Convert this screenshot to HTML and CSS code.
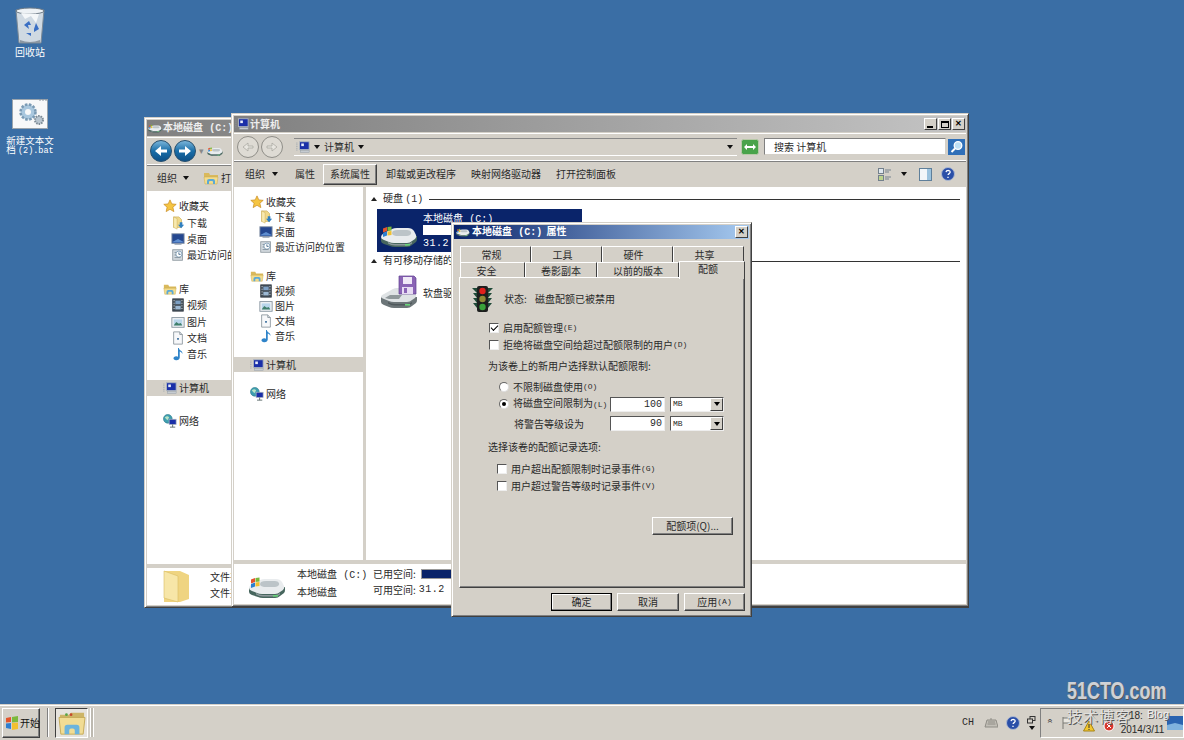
FILE: index.html
```html
<!DOCTYPE html>
<html lang="zh-CN">
<head>
<meta charset="utf-8">
<title>本地磁盘 (C:) 属性</title>
<link rel="stylesheet" href="styles.css">
</head>
<body>
<svg class="defs" width="0" height="0">
  <defs>
    <symbol id="i-star" viewBox="0 0 16 16"><path d="M8 1l2.100 4.600 5 .5-3.800 3.300 1.100 5L8 11.800 3.600 14.400l1.100-5L.9 6.100l5-.5z" fill="#f5c542" stroke="#c98a1e" stroke-width=".8"/></symbol>
    <symbol id="i-lib" viewBox="0 0 16 16"><path d="M1 3h5l1 2h8v3H1z" fill="#d9b95c"/><path d="M1 7h14l-1 7H2z" fill="#f3dc8c" stroke="#c9a94e" stroke-width=".5"/><path d="M4 14v-3q0-2 2-2h4q2 0 2 2v3h-2v-2q0-1-1-1H7q-1 0-1 1v2z" fill="#5ba9d6"/></symbol>
    <symbol id="i-dl" viewBox="0 0 16 16"><path d="M3 1h6l3 3v9H3z" fill="#f0d98a" stroke="#c6a850" stroke-width=".7"/><path d="M3 1l4 2v12l-4-2z" fill="#f8eab0" stroke="#c6a850" stroke-width=".5"/><path d="M10 7h3v3h2l-3.500 4L8 10h2z" fill="#2f7fc1"/></symbol>
    <symbol id="i-desk" viewBox="0 0 16 16"><rect x="1" y="2" width="14" height="11" fill="#24478f" stroke="#8a97a8"/><path d="M2 11l6-3 6 3v1H2z" fill="#5e8ed0"/><rect x="4" y="13" width="8" height="1.500" fill="#8a97a8"/></symbol>
    <symbol id="i-recent" viewBox="0 0 16 16"><rect x="2" y="2" width="11" height="12" fill="#d7dde2" stroke="#8d979f"/><circle cx="9" cy="7" r="3.500" fill="#fff" stroke="#7f9fb8"/><path d="M9 5v2.300h2" stroke="#41688a" fill="none"/><path d="M4 5h2M4 8h2M4 11h7" stroke="#7b8a96"/></symbol>
    <symbol id="i-video" viewBox="0 0 16 16"><rect x="2" y="1" width="12" height="14" fill="#47525c" stroke="#2f3840"/><rect x="5" y="3" width="6" height="4" fill="#7da0c4"/><rect x="5" y="9" width="6" height="4" fill="#9db9d4"/><path d="M3 3h1M3 6h1M3 9h1M3 12h1M12 3h1M12 6h1M12 9h1M12 12h1" stroke="#fff"/></symbol>
    <symbol id="i-pic" viewBox="0 0 16 16"><rect x="1" y="3" width="14" height="11" fill="#f4f6f8" stroke="#7f8d99"/><rect x="3" y="5" width="10" height="7" fill="#b8d5ea"/><path d="M3 12l3-4 3 2 2-1 2 3z" fill="#3f7f6b"/></symbol>
    <symbol id="i-doc" viewBox="0 0 16 16"><path d="M3 1h7l3 3v11H3z" fill="#f7f8fa" stroke="#8d979f"/><path d="M10 1v3h3" fill="#d8dee3" stroke="#8d979f"/><rect x="7" y="8" width="2" height="2" fill="#3d6f9e"/></symbol>
    <symbol id="i-music" viewBox="0 0 16 16"><path d="M9 1c0 3 5 3 4 7-.6-1.800-2-2.500-3-2.800V12c0 2-2 3.300-4.500 3S2 13 3.500 11.500 7 10.500 8 11V1z" fill="#2f84c9"/></symbol>
    <symbol id="i-pc" viewBox="0 0 16 16"><path d="M1 3v10" stroke="#8e9aa5" stroke-dasharray="1 1"/><rect x="4" y="2" width="11" height="9" fill="#1a2fa8" stroke="#aeb7c0"/><path d="M6 4h3v3H6z" fill="#e8eefc"/><rect x="5" y="12" width="10" height="2" fill="#c5cbd1" stroke="#8e9aa5" stroke-width=".5"/></symbol>
    <symbol id="i-net" viewBox="0 0 16 16"><circle cx="5.500" cy="5.500" r="5" fill="#3f9fb0" stroke="#1f6d80" stroke-width=".6"/><path d="M2 4q3-3 5 0l-2 3z" fill="#b9e4c6"/><rect x="7" y="6" width="8" height="6" fill="#1a2fa8" stroke="#aeb7c0" stroke-width=".8"/><path d="M11 12v3M8 15h6" stroke="#566"/></symbol>
    <symbol id="i-drive" viewBox="0 0 38 24"><path d="M1 14v4q0 2 3 3l6 2q2 1 5 1h12q3 0 5-2l4-3q1-1 1-3v-3z" fill="#47665e"/><path d="M1 14q0-2 3-4l8-4q2-1 5-1h11q4 0 6 3l2 4q1 2-1 4l-3 2q-2 2-5 2H14q-3 0-5-1l-5-2q-3-1-3-3z" fill="#e9ecee"/><path d="M13 8q2-1 5-1h9q3 0 4 2 1 3-4 4H16q-6-1-3-5z" fill="#bcc4c8"/><path d="M8 19q3 2 7 2h12q3 0 5-2v1.500q-2 2-5 2H15q-4 0-7-2z" fill="#8d999b"/><rect x="25" y="21" width="5" height="1.600" fill="#6bd47a"/><path d="M3 5.500l4-1.500v4l-4 1.500z" fill="#e4532d"/><path d="M7.500 4l4-.5v4l-4 .5z" fill="#7bb83a"/><path d="M3 10l4-1.500v4L3 14z" fill="#2b7fd0"/><path d="M7.500 8.500l4-.5v4l-4 .5z" fill="#f2c02e"/></symbol>
    <symbol id="i-floppy" viewBox="0 0 38 35"><path d="M1 22v5q0 2 3 3l5 2q2 1 5 1h13q3 0 5-2l4-3q1-1 1-3v-3z" fill="#6c7578"/><path d="M1 22q0-2 3-3l9-5q2-1 4-1h11q3 0 5 2l3 4q1 2-1 4l-3 2q-2 2-5 2H14q-3 0-5-1l-5-2q-3-1-3-2z" fill="#dfe3e5"/><path d="M5 23l5-3h12l-3 4H9z" fill="#8f989b"/><path d="M8 27q3 2 7 2h12q3 0 5-2v1.500q-2 2-5 2H15q-4 0-7-2z" fill="#4f585b"/><rect x="25" y="29" width="5" height="1.600" fill="#6bd47a"/><path d="M19 1h15l2 2v16H19z" fill="#8a64b5" stroke="#5f4090" stroke-width=".7"/><rect x="23" y="2" width="9" height="7" fill="#f0e9f7"/><rect x="22" y="12" width="11" height="7" fill="#e7dcf3"/><rect x="24" y="13" width="3" height="5" fill="#8a64b5"/></symbol>
    <symbol id="i-light" viewBox="0 0 21 28"><path d="M0 3h21l-5 5 4 0-4 5 4 0-4 5 4 0-4 5H5L1 18h4L1 13h4L1 8h4z" fill="#1f4a38"/><rect x="5" y="1" width="11" height="26" rx="2" fill="#1d1f1e"/><circle cx="10.500" cy="6" r="3.200" fill="#e0201c"/><circle cx="10.500" cy="14" r="3.200" fill="#8f8a35"/><circle cx="10.500" cy="22" r="3.200" fill="#3aa23a"/></symbol>
    <symbol id="i-help" viewBox="0 0 14 14"><circle cx="7" cy="7" r="6.500" fill="#2a4fa8" stroke="#aeb9d0"/><path d="M5 5.200q.3-1.800 2.200-1.800 2 .1 2 1.700c0 1.500-2.100 1.500-2.100 3M7 9.700v1.300" stroke="#fff" stroke-width="1.300" fill="none"/></symbol>
    <symbol id="i-left" viewBox="0 0 22 22"><circle cx="11" cy="11" r="10.500" fill="url(#g-blue)" stroke="#28506e"/><path d="M17 9.500h-6V6l-6 5 6 5v-3.500h6z" fill="#fff"/></symbol>
    <symbol id="i-right" viewBox="0 0 22 22"><circle cx="11" cy="11" r="10.500" fill="url(#g-blue)" stroke="#28506e"/><path d="M5 9.500h6V6l6 5-6 5v-3.500H5z" fill="#fff"/></symbol>
    <symbol id="i-gleft" viewBox="0 0 22 22"><circle cx="11" cy="11" r="10.500" fill="#dedbd4" stroke="#8f8e88"/><path d="M16 10h-5V7l-5 4 5 4v-3h5z" fill="#e8e6e0" stroke="#a5a39c" stroke-width=".7"/></symbol>
    <symbol id="i-gright" viewBox="0 0 22 22"><circle cx="11" cy="11" r="10.500" fill="#dedbd4" stroke="#8f8e88"/><path d="M6 10h5V7l5 4-5 4v-3H6z" fill="#e8e6e0" stroke="#a5a39c" stroke-width=".7"/></symbol>
    <linearGradient id="g-blue" x1="0" y1="0" x2="0" y2="1"><stop offset="0" stop-color="#7fb8dc"/><stop offset=".5" stop-color="#1a6ea8"/><stop offset="1" stop-color="#0d4f86"/></linearGradient>
  </defs>
</svg>

<main class="desktop">
  <div class="shortcut shortcut-bin">
    <svg class="bin-icon" viewBox="0 0 30 38"><path d="M1 3h28l-3 33H4z" fill="#cfd9e2" stroke="#7d8a96"/><ellipse cx="15" cy="4" rx="14" ry="3" fill="#eef2f5" stroke="#6f7c88"/><path d="M6 6l4 6 6-3 5 7 3-9z" fill="#f4f7f9"/><path d="M9 18l5-4 2 4h-3l1 4zM21 16l3 6-5 3v-3zM11 26l5 0v3z" fill="#3a6fc4"/><path d="M5 33q10 4 20 0v3H5z" fill="#8b97a2"/></svg>
    <span class="shortcut-label">回收站</span>
  </div>
  <div class="shortcut shortcut-bat">
    <svg class="bat-icon" viewBox="0 0 36 30"><rect x=".5" y=".5" width="35" height="29" fill="#f7f8f9" stroke="#9aa4ad"/><path d="M27 1h2M30 1h2M33 1h2" stroke="#8c96a0"/><circle cx="16" cy="13" r="7.500" fill="#a9c7de" stroke="#7a9ab4" stroke-width="2.500" stroke-dasharray="2.500 1.500"/><circle cx="16" cy="13" r="3" fill="#f7f8f9"/><circle cx="27" cy="21" r="4" fill="#b8c5cf" stroke="#7d8b96" stroke-width="2" stroke-dasharray="1.500 1"/></svg>
    <span class="shortcut-label"><span class="line">新建文本文</span><span class="line">档 <span class="lat-sm">(2).bat</span></span></span>
  </div>

  <section class="window window-back">
    <header class="titlebar titlebar-gray titlebar-back">
      <svg class="ico14"><use href="#i-drive"/></svg><span class="title-text">本地磁盘 <span class="lat lat-gap">(C:)</span></span>
    </header>
    <div class="addrbar addrbar-back">
      <svg class="ico22"><use href="#i-left"/></svg>
      <svg class="ico22"><use href="#i-right"/></svg>
      <span class="arrow-mini">▾</span>
      <svg class="ico16"><use href="#i-drive"/></svg>
    </div>
    <div class="toolbar toolbar-back">
      <span class="tb-item">组织<i class="caret"></i></span>
      <span class="tb-open"><svg class="ico16"><use href="#i-lib"/></svg>打开</span>
    </div>
    <div class="main">
      <nav class="navpane navpane-back">
        <div class="nav-row"><svg class="ico14"><use href="#i-star"/></svg>收藏夹</div>
        <div class="nav-row nav-sub"><svg class="ico14"><use href="#i-dl"/></svg>下载</div>
        <div class="nav-row nav-sub"><svg class="ico14"><use href="#i-desk"/></svg>桌面</div>
        <div class="nav-row nav-sub"><svg class="ico14"><use href="#i-recent"/></svg>最近访问的位置</div>
        <div class="nav-row nav-gap"><svg class="ico14"><use href="#i-lib"/></svg>库</div>
        <div class="nav-row nav-sub"><svg class="ico14"><use href="#i-video"/></svg>视频</div>
        <div class="nav-row nav-sub"><svg class="ico14"><use href="#i-pic"/></svg>图片</div>
        <div class="nav-row nav-sub"><svg class="ico14"><use href="#i-doc"/></svg>文档</div>
        <div class="nav-row nav-sub"><svg class="ico14"><use href="#i-music"/></svg>音乐</div>
        <div class="nav-row nav-gap nav-selected"><svg class="ico14"><use href="#i-pc"/></svg>计算机</div>
        <div class="nav-row nav-gap"><svg class="ico14"><use href="#i-net"/></svg>网络</div>
      </nav>
    </div>
    <footer class="details details-back">
      <svg class="folder-big" viewBox="0 0 28 34"><path d="M1 2h16l9 4v24l-9 3H1z" fill="#efd481"/><path d="M1 2l14 5v26L1 29z" fill="#f7e6a8" stroke="#d9bc62" stroke-width=".6"/></svg>
      <div class="details-lines"><span>文件夹</span><span>文件夹</span></div>
    </footer>
  </section>

  <section class="window window-front">
    <header class="titlebar titlebar-gray titlebar-front">
      <svg class="ico14"><use href="#i-pc"/></svg><span class="title-text">计算机</span>
      <div class="caption-btns">
        <button class="cap-btn"><i class="cap-min"></i></button>
        <button class="cap-btn"><i class="cap-max"></i></button>
        <button class="cap-btn cap-x">✕</button>
      </div>
    </header>
    <div class="addrbar">
      <svg class="ico22"><use href="#i-gleft"/></svg>
      <svg class="ico22"><use href="#i-gright"/></svg>
      <div class="addr-field">
        <svg class="ico14"><use href="#i-pc"/></svg><i class="caret caret-s"></i><span>计算机</span><i class="caret caret-s"></i>
        <i class="caret caret-end"></i>
      </div>
      <svg class="refresh" viewBox="0 0 18 16"><rect x=".5" y=".5" width="17" height="15" rx="2" fill="#49a34a" stroke="#b8c9a8"/><path d="M3 8l3-3v2h3v2H6v2zM15 8l-3 3V9H9V7h3V5z" fill="#fff"/></svg>
      <div class="search-box">搜索 计算机</div>
      <svg class="search-btn" viewBox="0 0 17 16"><rect width="17" height="16" fill="#2f6fb8"/><circle cx="10" cy="6.500" r="3.800" fill="#bfe0f5" stroke="#fff" stroke-width="1.300"/><path d="M7 9.500l-3.500 3.500" stroke="#fff" stroke-width="2"/></svg>
    </div>
    <div class="toolbar">
      <span class="tb-item tb-org">组织<i class="caret"></i></span>
      <span class="tb-item tb-prop">属性</span>
      <span class="tb-button">系统属性</span>
      <span class="tb-item tb-uninstall">卸载或更改程序</span>
      <span class="tb-item tb-map">映射网络驱动器</span>
      <span class="tb-item tb-map">打开控制面板</span>
      <div class="tb-right">
        <svg class="view-ico" viewBox="0 0 13 13"><rect x=".5" y=".5" width="5" height="5" fill="#dfe7ee" stroke="#73808c"/><rect x=".5" y="7.500" width="5" height="5" fill="#bcd38c" stroke="#73808c"/><path d="M7 2h6M7 4h4M7 9h6M7 11h4" stroke="#77838e"/></svg>
        <i class="caret"></i>
        <svg class="pane-ico" viewBox="0 0 13 13"><rect x=".5" y=".5" width="12" height="12" fill="#f2f6f9" stroke="#5f7f9a"/><rect x="8" y="1" width="4" height="11" fill="#9cc3de"/></svg>
        <svg class="ico14"><use href="#i-help"/></svg>
      </div>
    </div>
    <div class="main">
      <nav class="navpane">
        <div class="nav-row"><svg class="ico14"><use href="#i-star"/></svg>收藏夹</div>
        <div class="nav-row nav-sub"><svg class="ico14"><use href="#i-dl"/></svg>下载</div>
        <div class="nav-row nav-sub"><svg class="ico14"><use href="#i-desk"/></svg>桌面</div>
        <div class="nav-row nav-sub"><svg class="ico14"><use href="#i-recent"/></svg>最近访问的位置</div>
        <div class="nav-row nav-gap"><svg class="ico14"><use href="#i-lib"/></svg>库</div>
        <div class="nav-row nav-sub"><svg class="ico14"><use href="#i-video"/></svg>视频</div>
        <div class="nav-row nav-sub"><svg class="ico14"><use href="#i-pic"/></svg>图片</div>
        <div class="nav-row nav-sub"><svg class="ico14"><use href="#i-doc"/></svg>文档</div>
        <div class="nav-row nav-sub"><svg class="ico14"><use href="#i-music"/></svg>音乐</div>
        <div class="nav-row nav-gap nav-selected"><svg class="ico14"><use href="#i-pc"/></svg>计算机</div>
        <div class="nav-row nav-gap"><svg class="ico14"><use href="#i-net"/></svg>网络</div>
      </nav>
      <div class="content">
        <div class="group-head"><i class="tri"></i><span>硬盘 <span class="lat">(1)</span></span><i class="group-line"></i></div>
        <div class="tile">
          <svg class="tile-ico"><use href="#i-drive"/></svg>
          <div class="tile-text"><span>本地磁盘 <span class="lat lat-gap">(C:)</span></span><i class="tile-bar"></i><span class="mono">31.2 GB 可用</span></div>
        </div>
        <div class="group-head group-head-2"><i class="tri"></i><span>有可移动存储的设备 <span class="lat">(1)</span></span><i class="group-line"></i></div>
        <div class="floppy"><svg class="floppy-ico"><use href="#i-floppy"/></svg><span>软盘驱动器 (A:)</span></div>
      </div>
    </div>
    <footer class="details">
      <svg class="details-ico"><use href="#i-drive"/></svg>
      <div class="details-name"><span>本地磁盘 <span class="lat lat-gap">(C:)</span></span><span>本地磁盘</span></div>
      <div class="details-use">
        <div class="use-row">已用空间: <i class="use-bar"><i class="use-fill"></i></i></div>
        <div class="use-row">可用空间: <span class="mono">31.2 GB</span></div>
      </div>
    </footer>
  </section>

  <section class="dialog">
    <header class="dlg-title">
      <svg class="ico14"><use href="#i-drive"/></svg><span>本地磁盘 <span class="lat lat-gap">(C:)</span> 属性</span>
      <button class="cap-btn dlg-close">✕</button>
    </header>
    <div class="tabs tabs-1">
      <span class="tab tab-w71">常规</span><span class="tab tab-w71">工具</span><span class="tab tab-w71">硬件</span><span class="tab tab-w71">共享</span>
    </div>
    <div class="tabs tabs-2">
      <span class="tab tab-w65">安全</span><span class="tab tab-w72">卷影副本</span><span class="tab tab-w82">以前的版本</span><span class="tab tab-active">配额</span>
    </div>
    <div class="panel">
      <div class="status"><svg class="light"><use href="#i-light"/></svg><span class="status-k">状态:</span><span>磁盘配额已被禁用</span></div>
      <label class="row row-check row-1"><i class="check checked"></i>启用配额管理<small>(E)</small></label>
      <label class="row row-check row-2"><i class="check"></i>拒绝将磁盘空间给超过配额限制的用户<small>(D)</small></label>
      <div class="row row-text row-3">为该卷上的新用户选择默认配额限制:</div>
      <label class="row row-radio row-4"><i class="radio"></i>不限制磁盘使用<small>(O)</small></label>
      <label class="row row-radio row-5"><i class="radio on"></i><span class="limit-label">将磁盘空间限制为<small>(L)</small></span><span class="num">100</span><span class="select">MB<i class="select-btn"></i></span></label>
      <div class="row row-warn"><span class="warn-label">将警告等级设为</span><span class="num">90</span><span class="select">MB<i class="select-btn"></i></span></div>
      <div class="row row-text row-7">选择该卷的配额记录选项:</div>
      <label class="row row-check2 row-8"><i class="check"></i>用户超出配额限制时记录事件<small>(G)</small></label>
      <label class="row row-check2 row-9"><i class="check"></i>用户超过警告等级时记录事件<small>(V)</small></label>
      <button class="btn btn-entries">配额项(Q)...</button>
    </div>
    <div class="dlg-buttons">
      <button class="btn btn-default">确定</button>
      <button class="btn btn-cancel">取消</button>
      <button class="btn btn-apply">应用<small>(A)</small></button>
    </div>
  </section>

  <div class="wm wm-1">51CTO.com</div>
  <div class="wm wm-2">技术博客</div>
  <div class="wm wm-3">Blog</div>
</main>

<footer class="taskbar">
  <button class="start"><svg class="start-flag" viewBox="0 0 14 14"><path d="M1 2l5-1v5l-5 .5z" fill="#e4552c"/><path d="M7 1l6-1v6l-6 .5z" fill="#7cb93c"/><path d="M1 7.500l5-.5v6l-5-1z" fill="#2f7fd0"/><path d="M7 7l6-.5V13l-6 1z" fill="#f2c02e"/></svg>开始</button>
  <i class="tb-div"></i>
  <div class="task-btn"><svg class="task-ico" viewBox="0 0 30 28"><path d="M2 5h10l2-2h14v6H2z" fill="#cdb567"/><circle cx="9" cy="5" r="1.500" fill="#59a447"/><circle cx="14" cy="5" r="1.500" fill="#c64a2b"/><path d="M1 8h28l-2 18H3z" fill="#f1dc94" stroke="#c5aa56"/><path d="M7 26v-7q0-3 3-3h10q3 0 3 3v7h-5v-4q0-2-2-2h-2q-2 0-2 2v4z" fill="#6cb4dd"/></svg></div>
  <i class="tb-grip"></i>
  <div class="tray-left">
    <span class="mono-ch">CH</span>
    <svg class="kb" viewBox="0 0 14 12"><path d="M3 3h9l2 7H1z" fill="#c2bfb7" stroke="#8e8c85"/><path d="M4 5h7M3.500 7h8" stroke="#8e8c85"/><path d="M7 3V1" stroke="#8e8c85"/></svg>
    <svg class="ico14"><use href="#i-help"/></svg>
    <div class="tray-mini"><svg class="mini-win" viewBox="0 0 9 8"><rect x="3" y=".5" width="5" height="4" fill="none" stroke="#333"/><rect x=".5" y="3" width="5" height="4" fill="#d4d0c8" stroke="#333"/></svg><i class="caret caret-s"></i></div>
  </div>
  <div class="tray">
    <span class="chev">«</span>
    <svg class="flag" viewBox="0 0 10 12"><path d="M1 0v12M1 1h8v5H1" fill="#e8e6e0" stroke="#7b7a75"/></svg>
    <svg class="warn" viewBox="0 0 12 12"><path d="M6 1l5.500 10H.5z" fill="#f2c62e" stroke="#a68416"/><path d="M6 4v4M6 9v1" stroke="#333"/></svg>
    <svg class="err" viewBox="0 0 12 12"><circle cx="6" cy="6" r="5" fill="#d8382e" stroke="#fff"/><path d="M4 4l4 4M8 4l-4 4" stroke="#fff"/></svg>
    <div class="clock"><span class="clock-time">18:</span><span>2014/3/11</span></div>
    <svg class="show-desk" viewBox="0 0 16 14"><rect width="16" height="14" fill="#2a64b0"/><path d="M0 9l8-2 8 2v5H0z" fill="#7fb2de"/></svg>
  </div>
</footer>
</body>
</html>
```
FILE: styles.css
```css
* { box-sizing: border-box; }
html, body { margin: 0; padding: 0; height: 740px; overflow: hidden; }
body {
  font-family: "Noto Sans CJK SC", "Liberation Sans", sans-serif;
  font-size: 10px;
  line-height: 14px;
  color: #2a2a2a;
  background: #3a6ea5;
  display: flex;
  flex-direction: column;
}
i { display: block; font-style: normal; }
small { font-family: "Liberation Mono", monospace; font-size: 8px; }
button { font: inherit; color: inherit; padding: 0; margin: 0; }
.defs { position: absolute; }
.ico14 { width: 14px; height: 14px; flex: none; }
.ico16 { width: 16px; height: 16px; flex: none; }
.ico22 { width: 22px; height: 22px; flex: none; }
.mono { font-family: "Liberation Mono", monospace; font-size: 10px; letter-spacing: .5px; }
.lat { font-family: "Liberation Mono", monospace; font-size: 10px; }
.lat-sm { font-family: "Liberation Mono", monospace; font-size: 8.500px; }
.lat-gap { margin: 0 2px 0 4px; }

.desktop { position: relative; height: 704px; flex: none; background: #3a6ea5; overflow: visible; }

/* Desktop shortcuts */
.shortcut { position: absolute; width: 60px; display: flex; flex-direction: column; align-items: center; color: #fff; text-align: center; }
.shortcut-bin { left: 0; top: 7px; }
.shortcut-bat { left: 0; top: 99px; }
.bin-icon { width: 30px; height: 38px; }
.bat-icon { width: 36px; height: 30px; }
.shortcut-bat .shortcut-label { margin-top: 7px; font-size: 9.500px; display: flex; flex-direction: column; align-items: center; }
.line { display: block; height: 9px; line-height: 9px; white-space: nowrap; }
.shortcut-bin .shortcut-label { margin-top: 1px; line-height: 12px; }

/* Explorer windows */
.window {
  position: absolute;
  display: flex;
  flex-direction: column;
  background: #d4d0c8;
  padding: 2px;
  border: 1px solid;
  border-color: #d4d0c8 #404040 #404040 #d4d0c8;
  box-shadow: inset 1px 1px 0 #fff, inset -1px -1px 0 #808080;
}
.window-back { left: 144px; top: 117px; width: 825px; height: 491px; }
.window-front { left: 231px; top: 113px; width: 738px; height: 494px; }

.titlebar { height: 16px; flex: none; display: flex; align-items: center; gap: 2px; padding-left: 2px; font-weight: 700; }
.titlebar-gray { background: linear-gradient(90deg, #808080, #c4c4c4); color: #eee; }
.titlebar-front, .titlebar-back { padding-left: 1px; gap: 1px; }
.title-text { white-space: nowrap; }
.caption-btns { margin-left: auto; display: flex; gap: 1px; padding-right: 1px; }
.cap-btn {
  width: 13px; height: 12px; background: #d4d0c8; display: flex; align-items: center; justify-content: center;
  border: 1px solid; border-color: #fff #404040 #404040 #fff; font-size: 8px; line-height: 8px; color: #000;
  font-family: "Liberation Sans", sans-serif; font-weight: 700;
}
.cap-min { width: 6px; height: 2px; background: #000; margin-top: 5px; margin-right: 2px; }
.cap-max { width: 8px; height: 7px; border: 1px solid #000; border-top-width: 2px; }

.addrbar { height: 28px; margin-top: 1px; flex: none; display: flex; align-items: center; gap: 2px; padding: 0 1px 0 3px; border-bottom: 1px solid #fff; box-shadow: 0 1px 0 #808080, inset 0 1px 0 #fff; }
.addr-field { flex: 1; height: 18px; margin-left: 9px; display: flex; align-items: center; gap: 4px; padding-left: 2px; border-top: 1px solid #888; border-bottom: 1px solid #fff; margin-right: 1px; font-size: 10px; }
.caret { width: 0; height: 0; border: 3px solid transparent; border-top: 4px solid #111; border-bottom: 0; margin-left: 6px; display: inline-block; vertical-align: middle; }
.caret-s { margin-left: 0; }
.caret-end { margin-left: auto; margin-right: 4px; }
.refresh { width: 18px; height: 16px; flex: none; margin-left: 1px; }
.search-box { width: 182px; height: 17px; margin-left: 3px; background: #fff; padding-left: 9px; line-height: 16px; flex: none; border: 1px solid; border-color: #808080 #d4d0c8 #d4d0c8 #808080; }
.search-btn { width: 17px; height: 16px; flex: none; margin-left: 0; }

.toolbar { height: 26px; flex: none; display: flex; align-items: center; padding-left: 11px; }
.tb-item { display: flex; align-items: center; white-space: nowrap; }
.tb-org .caret { margin-left: 7px; }
.tb-prop { margin-left: 17px; }
.tb-button { margin-left: 8px; width: 54px; height: 21px; display: flex; align-items: center; justify-content: center; border: 1px solid; border-color: #fff #404040 #404040 #fff; box-shadow: inset -1px -1px 0 #808080; }
.tb-uninstall { margin-left: 9px; }
.tb-map { margin-left: 15px; }
.tb-right { margin-left: auto; display: flex; align-items: center; padding-right: 11px; }
.view-ico { width: 13px; height: 13px; }
.tb-right .caret { margin: 0 12px 0 10px; }
.pane-ico { width: 13px; height: 13px; margin-right: 9px; }
.toolbar-back { height: 26px; padding-left: 10px; }
.tb-open { display: flex; align-items: center; gap: 2px; margin-left: 14px; white-space: nowrap; }
.addrbar-back .arrow-mini { color: #888; font-size: 9px; margin: 0 1px; }

.main { flex: 1; display: flex; min-height: 0; background: #fff; }
.navpane { width: 129px; flex: none; padding-top: 7px; background: #fff; --row: 15px; --gap: 14px; }
.navpane-back { padding-top: 7px; --row: 16.4px; --gap: 17px; width: 500px; }
.nav-row { height: var(--row); display: flex; align-items: center; gap: 2px; padding-left: 16px; white-space: nowrap; }
.nav-sub { padding-left: 25px; }
.navpane-back .nav-sub { padding-left: 24px; }
.nav-gap { margin-top: var(--gap); }
.nav-selected { background: #d4d0c8; }

.content { flex: 1; border-left: 3px solid #d4d0c8; padding: 5px 6px 0 5px; }
.group-head { height: 14px; display: flex; align-items: center; gap: 6px; }
.group-head-2 { margin-top: 2px; }
.group-head span { white-space: nowrap; }
.tri { width: 0; height: 0; border: 3px solid transparent; border-bottom: 4px solid #222; border-top: 0; }
.group-line { flex: 1; height: 1px; background: #333; }
.tile { margin: 3px 0 0 6px; width: 205px; height: 43px; background: #0a246a; color: #fff; display: flex; padding: 2px 3px; }
.tile-ico { width: 38px; height: 24px; margin-top: 12px; flex: none; }
.tile-text { margin-left: 5px; display: flex; flex-direction: column; flex: 1; }
.tile-text > span { height: 13px; line-height: 13px; white-space: nowrap; }
.tile-bar { height: 10px; background: #fff; margin: 1px 0 2px; width: 130px; }
.floppy { margin: 7px 0 0 9px; display: flex; align-items: center; gap: 5px; white-space: nowrap; }
.floppy-ico { width: 38px; height: 35px; flex: none; }

.details { height: 44px; flex: none; border-top: 4px solid #d4d0c8; background: #fff; display: flex; padding-top: 3px; padding-left: 14px; }
.details-ico { width: 38px; height: 24px; margin-top: 7px; flex: none; }
.details-name { margin-left: 11px; width: 76px; display: flex; flex-direction: column; gap: 2px; white-space: nowrap; }
.details-use { display: flex; flex-direction: column; gap: 2px; }
.use-row { display: flex; align-items: center; gap: 3px; height: 14px; white-space: nowrap; }
.use-bar { width: 100px; height: 10px; border: 1px solid #999; background: #fff; margin-left: 2px; }
.use-fill { width: 70px; height: 100%; background: #0a246a; }
.details-back { padding-top: 1px; padding-left: 16px; height: 41px; }
.folder-big { width: 28px; height: 34px; }
.details-lines { margin-left: 19px; display: flex; flex-direction: column; gap: 2px; margin-top: 1px; white-space: nowrap; }

/* Dialog */
.dialog {
  position: absolute; left: 451px; top: 222px; width: 301px; height: 395px;
  background: #d4d0c8; padding: 2px; display: flex; flex-direction: column;
  border: 1px solid; border-color: #d4d0c8 #404040 #404040 #d4d0c8;
  box-shadow: inset 1px 1px 0 #fff, inset -1px -1px 0 #808080;
}
.dlg-title { height: 14px; flex: none; background: linear-gradient(90deg, #0a246a, #a6caf0); color: #fff; font-weight: 700; display: flex; align-items: center; gap: 2px; padding-left: 2px; white-space: nowrap; }
.dlg-title .lat-gap { margin: 0 2px 0 4px; }
.dlg-close { margin-left: auto; margin-right: 1px; }
.tabs { display: flex; flex: none; margin-left: 6px; align-items: flex-end; }
.tabs-1 { margin-top: 7px; height: 16px; }
.tabs-2 { height: 15px; }
.tab { height: 100%; line-height: 11px; display: flex; align-items: center; justify-content: center; border-top: 1px solid #fff; border-left: 1px solid #fff; border-right: 1px solid #404040; }
.tab-w71 { width: 71px; padding-right: 8px; }
.tab-w65 { width: 65px; padding-right: 12px; }
.tab-w72 { width: 72px; }
.tab-w82 { width: 82px; }
.tab-active { width: 66px; height: 18px; margin-bottom: -2px; background: #d4d0c8; position: relative; z-index: 1; padding: 0 8px 4px 0; }
.panel { width: 286px; height: 311px; margin-left: 5px; flex: none; border: 1px solid; border-color: #fff #404040 #404040 #fff; box-shadow: inset -1px -1px 0 #808080; display: flex; flex-direction: column; }
.status { height: 28px; margin-top: 7px; padding-left: 12px; display: flex; align-items: center; flex: none; }
.light { width: 21px; height: 28px; margin-right: 11px; }
.status-k { width: 31px; }
.row { display: flex; align-items: center; height: 14px; flex: none; white-space: nowrap; }
.row-check { padding-left: 29px; }
.row-check2 { padding-left: 37px; }
.row-text { padding-left: 28px; }
.row-radio { padding-left: 39px; }
.row-1 { margin-top: 8px; }
.row-2 { margin-top: 3px; }
.row-3 { margin-top: 7px; }
.row-4 { margin-top: 7px; }
.row-5 { margin-top: 3px; }
.row-warn { margin-top: 5px; height: 15px; padding-left: 54px; }
.row-7 { margin-top: 9px; }
.row-8 { margin-top: 8px; }
.row-9 { margin-top: 3px; }
.check { width: 10px; height: 10px; margin-right: 4px; flex: none; background: #fff; border: 1px solid; border-color: #555 #eee #eee #555; }
.check.checked::after { content: ""; display: block; width: 6px; height: 3px; border-left: 1.500px solid #000; border-bottom: 1.500px solid #000; transform: rotate(-45deg); margin: 1px 0 0 1px; }
.radio { width: 10px; height: 10px; margin-right: 4px; flex: none; border-radius: 50%; background: #fff; border: 1px solid; border-color: #666 #ddd #ddd #666; display: flex; align-items: center; justify-content: center; }
.radio.on::after { content: ""; width: 4px; height: 4px; border-radius: 50%; background: #000; }
.limit-label { width: 97px; }
.warn-label { width: 96px; }
.num { width: 55px; height: 15px; background: #fff; text-align: right; padding-right: 2px; font-family: "Liberation Mono", monospace; font-size: 10px; line-height: 13px; border: 1px solid; border-color: #555 #eee #eee #555; }
.select { width: 54px; height: 15px; margin-left: 5px; background: #fff; display: flex; align-items: center; justify-content: space-between; padding-left: 2px; font-family: "Liberation Mono", monospace; font-size: 8px; border: 1px solid; border-color: #555 #eee #eee #555; }
.select-btn { width: 13px; height: 13px; background: #d4d0c8; border: 1px solid; border-color: #fff #404040 #404040 #fff; display: flex; align-items: center; justify-content: center; }
.select-btn::after { content: ""; border: 3px solid transparent; border-top: 4px solid #000; border-bottom: 0; }
.btn { background: #d4d0c8; border: 1px solid; border-color: #fff #404040 #404040 #fff; box-shadow: inset -1px -1px 0 #808080; height: 18px; display: flex; align-items: center; justify-content: center; line-height: 12px; white-space: nowrap; }
.btn-entries { width: 81px; margin: 24px 11px 0 auto; flex: none; }
.dlg-buttons { display: flex; justify-content: flex-end; gap: 5px; margin-top: 5px; padding-right: 4px; flex: none; }
.btn-default { width: 61px; border-color: #000; box-shadow: inset -1px -1px 0 #808080, inset 1px 1px 0 #fff; }
.btn-cancel { width: 62px; }
.btn-apply { width: 61px; }

/* Watermark */
.wm { position: absolute; z-index: 3; white-space: nowrap; }
.wm-1 { left: 1067px; top: 677px; font-family: "Liberation Sans", sans-serif; font-weight: 700; font-size: 23px; line-height: 28px; color: #cfd2d6; text-shadow: 1px 1px 0 #555, -1px 0 0 #7f858b; transform: scaleX(.78); transform-origin: left top; }
.wm-2 { left: 1067px; top: 707px; font-size: 15px; line-height: 18px; letter-spacing: 1px; color: #e0e0de; text-shadow: 1px 1px 0 #555; }
.wm-3 { left: 1147px; top: 707px; font-family: "Liberation Sans", sans-serif; font-size: 11px; line-height: 14px; color: #eee; text-shadow: 1px 1px 0 #555; }

/* Taskbar */
.taskbar { height: 36px; flex: none; background: #d4d0c8; border-top: 1px solid #d4d0c8; box-shadow: inset 0 1px 0 #fff; display: flex; align-items: center; padding-left: 2px; }
.start { width: 38px; height: 30px; display: flex; align-items: center; gap: 1px; padding-left: 2px; background: #d4d0c8; border: 1px solid; border-color: #fff #404040 #404040 #fff; box-shadow: inset -1px -1px 0 #808080; font-size: 10px; color: #111; white-space: nowrap; flex: none; }
.start-flag { width: 14px; height: 14px; flex: none; }
.tb-div { width: 2px; height: 29px; margin-left: 7px; border-left: 1px solid #808080; border-right: 1px solid #fff; }
.task-btn { width: 33px; height: 30px; margin-left: 6px; background: #e6e3dd; border: 1px solid; border-color: #404040 #fff #fff #404040; display: flex; align-items: center; justify-content: center; }
.task-ico { width: 28px; height: 26px; }
.tb-grip { width: 4px; height: 29px; margin-left: 2px; border-left: 1px solid #fff; border-right: 1px solid #fff; background: #bdb9b0; }
.tray-left { margin-left: auto; display: flex; align-items: center; height: 30px; }
.mono-ch { font-family: "Liberation Mono", monospace; font-size: 10px; width: 29px; padding-left: 7px; }
.kb { width: 14px; height: 12px; margin-right: 8px; }
.tray-mini { display: flex; flex-direction: column; align-items: center; gap: 2px; margin: 0 4px 0 7px; }
.mini-win { width: 9px; height: 8px; }
.tray { width: 144px; height: 30px; display: flex; align-items: center; border: 1px solid; border-color: #808080 #fff #fff #808080; padding-left: 5px; }
.chev { transform: rotate(90deg); font-size: 10px; line-height: 10px; width: 9px; }
.flag { width: 10px; height: 12px; margin-left: 7px; }
.warn { width: 12px; height: 12px; margin-left: 11px; margin-top: 6px; }
.err { width: 12px; height: 12px; margin-left: 8px; margin-top: 6px; }
.clock { width: 45px; margin-left: 5px; display: flex; flex-direction: column; align-items: center; font-family: "Liberation Sans", sans-serif; font-size: 10px; line-height: 14px; white-space: nowrap; }
.clock-time { width: 100%; padding-left: 9px; }
.show-desk { width: 16px; height: 14px; margin-left: auto; }
```
